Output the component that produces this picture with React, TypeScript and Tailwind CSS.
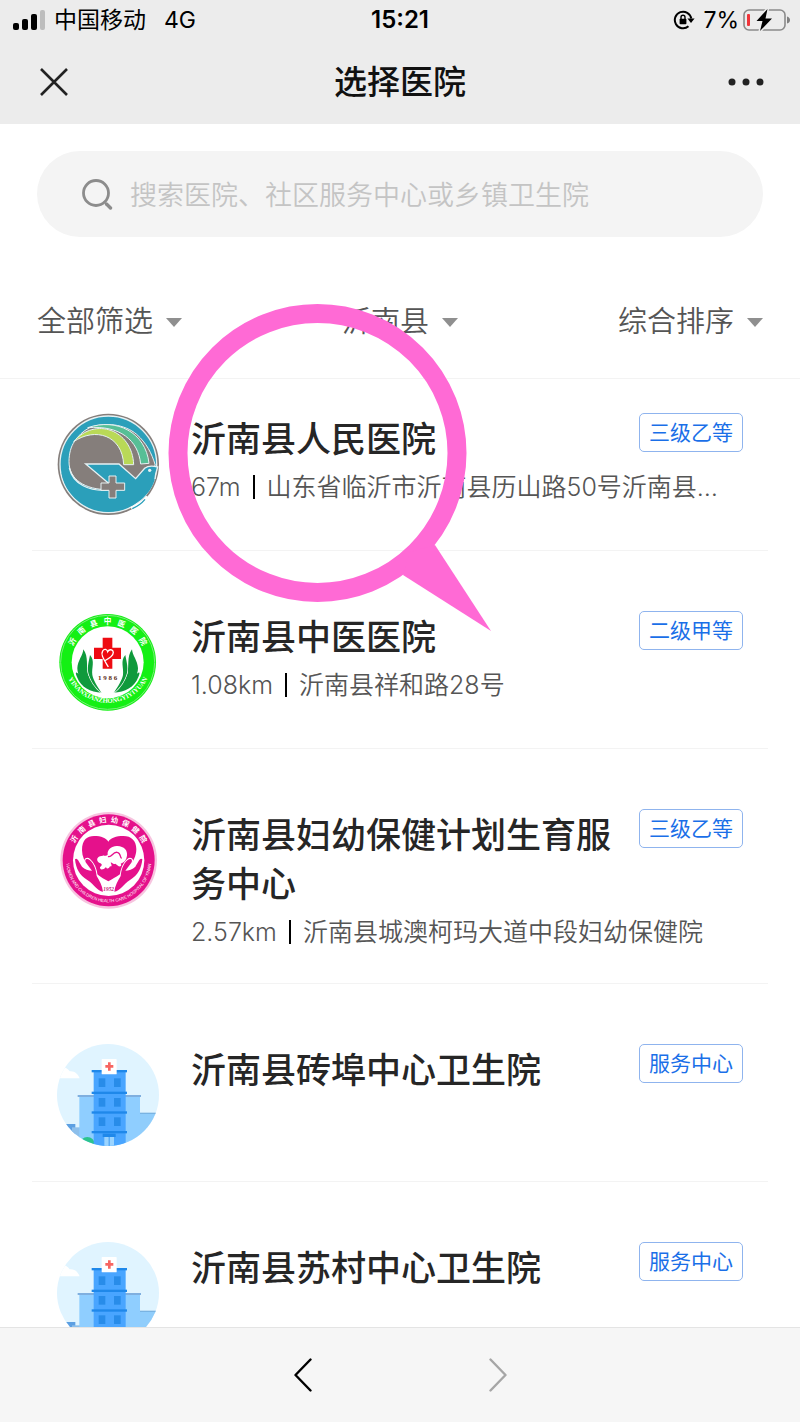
import React from 'react';

interface Hospital {
  name: string;
  level: string;
  distance?: string;
  address?: string;
  logo: React.FC;
}

const PeopleHospitalLogo: React.FC = () => (
  <svg viewBox="36 40 306 306" className="size-full" aria-hidden="true">
    <circle cx="190" cy="194" r="152" fill="#857e7b" />
    <circle cx="190" cy="194" r="145" fill="#2b9fba" stroke="#e6f1f3" strokeWidth="4" />
    {/* Серое поле и дуги */}
    <path
      d="M72 186 C72 162 78 140 88 126 C100 108 114 94 134 84 C180 66 240 74 275 104 C304 130 320 160 331 197 L272 237 L190 250 L190 270 C120 270 72 240 72 186 Z"
      fill="#857e7b"
      stroke="#e6f1f3"
      strokeWidth="3"
    />
    <path d="M128 84 C215 54 302 98 312 191 L287 193 C280 122 225 76 128 84 Z" fill="#57bf96" stroke="#e6f1f3" strokeWidth="3" />
    <path d="M86 126 C150 50 262 90 266 195 L236 195 C232 106 150 82 86 126 Z" fill="#b9d957" stroke="#e6f1f3" strokeWidth="3" />
    {/* Птица */}
    <path
      d="M122 193 L222 193 L272 237 L299 206 C310 197 324 198 338 202 C334 215 330 224 330 236 C318 290 260 334 190 336 C110 330 60 280 50 220 L72 205 C82 250 130 275 190 272 L190 250 Z"
      fill="#2b9fba"
    />
    <path d="M73 205 C84 254 134 276 190 271 M190 250 L122 193 L222 193 L272 237 L299 206 C310 197 324 198 338 202 C334 215 331 224 330 238" fill="none" stroke="#e6f1f3" strokeWidth="4" />
    <path d="M192 229 h21 v21 h26 v22 h-26 v23 h-21 v-23 h-24 v-22 h24 Z" fill="#857e7b" stroke="#e6f1f3" strokeWidth="3" />
    <circle cx="314" cy="212" r="5" fill="#e6f1f3" />
    <path d="M258 325 Q286 315 306 290" fill="none" stroke="#ffffff" strokeWidth="7" />
    <path d="M262 327 Q286 316 300 299" fill="none" stroke="#2b9fba" strokeWidth="4" />
  </svg>
);

const ChineseMedicineLogo: React.FC = () => (
  <svg viewBox="36 34 306 306" className="size-full" aria-hidden="true">
    <circle cx="188" cy="188" r="145" fill="#14f014" />
    <circle cx="188" cy="188" r="141" fill="none" stroke="#7dec7d" strokeWidth="3" />
    <circle cx="188" cy="188" r="108" fill="#ffffff" />
    <path id="tcm-top" d="M73 188 A115 115 0 0 1 303 188" fill="none" />
    <path id="tcm-bottom" d="M62 216 A133 133 0 0 0 316 216" fill="none" />
    <text className="fill-white font-['Noto_Sans_CJK_SC',sans-serif] text-[23px] font-bold">
      <textPath href="#tcm-top" startOffset="50%" textAnchor="middle">
        {'沂南县中医医院'.split('').join('\u2002\u00a0')}
      </textPath>
    </text>
    <text className="fill-white font-['Liberation_Serif',serif] text-[20px] font-bold">
      <textPath href="#tcm-bottom" startOffset="50%" textAnchor="middle">YINANXIANZHONGYIYIYUAN</textPath>
    </text>
    <path d="M173 114 h29 v30 h26 v34 h-26 v29 h-29 v-29 h-26 v-34 h26 Z" fill="#ee0b12" />
    <path d="M190 202 C176 178 166 164 173 154 C178 146 186 149 188 156 C193 147 204 149 205 158 C205 169 194 176 178 184" fill="none" stroke="#ffffff" strokeWidth="4" />
    <g id="tcm-hand" fill="#109a3c">
      <path d="M115 149 C114 168 98 182 97 206 C97 212 98 217 100 222 C92 216 90 218 96 232 C108 264 136 277 170 279 C152 264 138 246 130 226 C122 200 132 172 115 149 Z" />
      <path d="M135 166 C133 180 126 200 130 220 C137 244 150 264 169 279 C156 258 145 242 142 226 C139 204 151 184 135 166 Z" stroke="#ffffff" strokeWidth="4" paintOrder="stroke" />
    </g>
    <use href="#tcm-hand" transform="matrix(-1 0 0 1 376 0)" />
    <text x="188" y="241" textAnchor="middle" className="fill-[#5d2a18] font-['Liberation_Serif',serif] text-[21px] font-bold">1 9 8 6</text>
  </svg>
);

const MaternityLogo: React.FC = () => (
  <svg viewBox="37 39 306 306" className="size-full" aria-hidden="true">
    <circle cx="192" cy="193" r="145" fill="#f7c4df" />
    <circle cx="192" cy="193" r="138" fill="#e5118b" />
    <circle cx="192" cy="193" r="107" fill="#ffffff" />
    <path id="mch-top" d="M78 193 A114 114 0 0 1 306 193" fill="none" />
    <path id="mch-bottom" d="M65 207 A128 128 0 0 0 319 207" fill="none" />
    <text className="fill-white font-['Noto_Sans_CJK_SC',sans-serif] text-[22px] font-bold">
      <textPath href="#mch-top" startOffset="50%" textAnchor="middle">
        {'沂南县妇幼保健院'.split('').join('\u2002')}
      </textPath>
    </text>
    <text className="fill-white font-['Liberation_Sans',sans-serif] text-[13px]">
      <textPath href="#mch-bottom" startOffset="50%" textAnchor="middle">WOMEN AND CHILDREN HEALTH CARE HOSPITAL OF YINAN</textPath>
    </text>
    <path d="M191 256 C145 232 112 200 112 163 C112 130 128 120 148 120 C170 120 184 126 191 137 C198 126 214 120 236 120 C260 120 275 134 275 160 C275 200 238 232 191 256 Z" fill="#e5118b" />
    <path d="M189 176 C187 160 202 149 218 150 C239 151 249 163 247 179 C245 192 239 199 228 203 C232 208 228 213 222 211 L212 203 C205 208 202 197 198 200 C202 208 202 213 196 211 C192 220 186 219 184 213 C174 224 165 222 166 213 C174 208 172 203 165 201 C154 196 156 184 166 181 C178 177 186 181 189 176 Z" fill="#ffffff" />
    <path d="M190 181 C201 187 204 166 218 169 C229 171 225 184 231 187" fill="none" stroke="#e5118b" strokeWidth="4" />
    <g id="mch-hand">
      <path
        d="M91 190 C98 183 104 200 112 212 C120 220 132 224 142 224 L124 200 C118 190 127 185 135 192 C149 204 154 222 156 240 C164 254 173 268 175 287 C158 286 150 266 128 252 C104 238 94 218 91 190 Z"
        fill="#e5118b"
        stroke="#ffffff"
        strokeWidth="6"
        paintOrder="stroke"
      />
    </g>
    <use href="#mch-hand" transform="matrix(-1 0 0 1 384 0)" />
    <text x="192" y="284" textAnchor="middle" className="fill-[#c51a7c] font-['Liberation_Serif',serif] text-[16px] font-bold italic">1952</text>
  </svg>
);

const ServiceCenterLogo: React.FC = () => (
  <svg viewBox="37 40 306 306" className="size-full rounded-full" aria-hidden="true">
    <rect x="37" y="40" width="306" height="306" fill="#e0f4ff" />
    <path d="M30 143 V112 C48 104 68 109 75 122 C90 120 101 131 105 143 Z" fill="#ffffff" />
    <rect x="285" y="248" width="60" height="98" fill="#90cdfb" />
    <rect x="285" y="246" width="60" height="4" fill="#79b3e2" />
    <rect x="50" y="280" width="42" height="66" fill="#5c9fe2" />
    <rect x="82" y="290" width="24" height="56" fill="#8dbfeb" />
    <rect x="104" y="196" width="182" height="150" fill="#8fceff" />
    <rect x="99" y="193" width="190" height="6" fill="#7fafdf" />
    <ellipse cx="128" cy="340" rx="22" ry="21" fill="#2bc48f" />
    <rect x="147" y="122" width="96" height="224" fill="#49a5ff" />
    <g fill="#1f88ea">
      <rect x="141" y="118" width="106" height="7" />
      <rect x="141" y="183" width="106" height="7" />
      <rect x="141" y="242" width="106" height="7" />
      <rect x="141" y="301" width="106" height="7" />
      <rect x="174" y="309" width="39" height="10" />
    </g>
    <g fill="#288ce9">
      <rect x="162" y="143" width="20" height="26" />
      <rect x="208" y="143" width="20" height="26" />
      <rect x="162" y="202" width="20" height="26" />
      <rect x="208" y="202" width="20" height="26" />
      <rect x="162" y="260" width="20" height="26" />
      <rect x="208" y="260" width="20" height="26" />
    </g>
    <rect x="179" y="319" width="29" height="27" fill="#9bd4ff" />
    <rect x="192" y="319" width="3" height="27" fill="#3f9af0" />
    <rect x="171" y="85" width="45" height="46" rx="2" fill="#ffffff" />
    <path d="M190 95 h8 v8 h8 v8 h-8 v9 h-8 v-9 h-8 v-8 h8 Z" fill="#f76561" />
  </svg>
);

const hospitals: Hospital[] = [
  {
    name: '沂南县人民医院',
    level: '三级乙等',
    distance: '67m',
    address: '山东省临沂市沂南县历山路50号沂南县…',
    logo: PeopleHospitalLogo,
  },
  {
    name: '沂南县中医医院',
    level: '二级甲等',
    distance: '1.08km',
    address: '沂南县祥和路28号',
    logo: ChineseMedicineLogo,
  },
  {
    name: '沂南县妇幼保健计划生育服务中心',
    level: '三级乙等',
    distance: '2.57km',
    address: '沂南县城澳柯玛大道中段妇幼保健院',
    logo: MaternityLogo,
  },
  { name: '沂南县砖埠中心卫生院', level: '服务中心', logo: ServiceCenterLogo },
  { name: '沂南县苏村中心卫生院', level: '服务中心', logo: ServiceCenterLogo },
];

const filters = [
  { label: '筛选', value: '全部筛选' },
  { label: '地区', value: '沂南县' },
  { label: '排序', value: '综合排序' },
];

const StatusBar: React.FC = () => (
  <div className="grid h-10 grid-cols-3 items-center px-2.5 text-[23px] leading-10 text-black">
    <div className="flex items-center">
      <svg viewBox="0 0 34 22" className="mr-2 ml-0.5 h-[22px] w-[34px]" aria-hidden="true">
        <rect x="1" y="14" width="6" height="7" rx="2" />
        <rect x="10" y="10" width="6" height="11" rx="2" />
        <rect x="19" y="5" width="6" height="16" rx="2" />
        <rect x="28" y="1" width="5" height="20" rx="2" fill="#bdbdbd" />
      </svg>
      <span>中国移动</span>
      <span className="ml-[18px]">4G</span>
    </div>
    <div className="text-center text-2xl leading-10 font-semibold">15:21</div>
    <div className="flex items-center justify-end">
      <svg viewBox="0 0 22 20" className="mr-2 h-5 w-[22px]" aria-hidden="true">
        <path d="M15.5 16.3 A8.3 8.3 0 1 1 18.3 8.5" fill="none" stroke="#000" strokeWidth="2" />
        <path d="M14.4 8.6 H21.6 L18 13 Z" />
        <rect x="6.6" y="8.8" width="6.8" height="5.4" rx="0.8" />
        <path d="M8 9 V7.3 A2 2 0 0 1 12 7.3 V9" fill="none" stroke="#000" strokeWidth="1.4" />
      </svg>
      <span className="mr-1">7%</span>
      <svg viewBox="0 0 47 24" className="h-6 w-[47px]" aria-hidden="true">
        <rect x="1" y="2" width="41" height="20" rx="5" fill="none" stroke="#8a8a8a" strokeWidth="1.6" />
        <path d="M44 8.5 Q47 9.5 47 12 Q47 14.5 44 15.5 Z" fill="#808080" />
        <rect x="4" y="6" width="3" height="12" rx="1" fill="#f0353a" />
        <path d="M24.5 1 L13.5 13 H19.5 L17 23 L29 10.5 H22.5 Z" stroke="#ececec" strokeWidth="3" paintOrder="stroke" />
      </svg>
    </div>
  </div>
);

const HospitalRow: React.FC<{ hospital: Hospital }> = ({ hospital }) => {
  const Logo = hospital.logo;
  return (
    <li className="flex border-b border-[#f3f3f3] px-[25px] pt-15 pb-[35px] first:pt-[34px]">
      <div className="mr-8 size-[102px] shrink-0">
        <Logo />
      </div>
      <div className="min-w-0 flex-1">
        <div className="flex items-start justify-between">
          <h2 className="pt-0.5 text-[35px] leading-[49px] font-medium text-[#262626]">{hospital.name}</h2>
          <span className="shrink-0 rounded-[5px] border border-[#8fb4ee] px-[9px] text-[21px] leading-[37px] text-[#1a6fe8]">
            {hospital.level}
          </span>
        </div>
        {hospital.address && (
          <p className="mt-2 truncate text-[25px] leading-[31px] font-[350] text-[#555]">
            {hospital.distance}
            <span className="mx-3 inline-block h-6 w-0.5 bg-black align-[-3px]" />
            {hospital.address}
          </p>
        )}
      </div>
    </li>
  );
};

const App: React.FC = () => {
  return (
    <div className="relative flex h-screen flex-col overflow-hidden bg-white font-['Inter','Noto_Sans_CJK_SC',sans-serif]">
      <header className="shrink-0 bg-[#ececec]">
        <StatusBar />
        <div className="flex h-21 items-center justify-between px-9">
          <button type="button" aria-label="关闭" className="flex size-9 items-center justify-center">
            <svg viewBox="0 0 28 28" className="size-7" fill="none" stroke="#222" strokeWidth="2.6">
              <path d="M1 1 L27 27 M27 1 L1 27" />
            </svg>
          </button>
          <h1 className="text-[33px] leading-10 font-medium text-[#111]">选择医院</h1>
          <button type="button" aria-label="更多" className="flex size-9 items-center justify-center">
            <svg viewBox="0 0 36 8" className="h-2 w-9" fill="#222">
              <circle cx="4" cy="4" r="3.5" />
              <circle cx="18" cy="4" r="3.5" />
              <circle cx="32" cy="4" r="3.5" />
            </svg>
          </button>
        </div>
      </header>

      <main className="min-h-0 flex-1 overflow-hidden">
        {/* Поиск */}
        <label className="mx-[37px] mt-[27px] flex h-[86px] items-center rounded-full bg-[#f4f4f4] pl-11">
          <svg viewBox="0 0 32 32" className="mr-[17px] size-8 shrink-0" fill="none" stroke="#8c8c8c" strokeWidth="2.8">
            <circle cx="15" cy="15" r="12.5" />
            <path d="M25.5 26 L29.5 30" strokeWidth="3.4" strokeLinecap="round" />
          </svg>
          <input
            type="text"
            aria-label="搜索"
            placeholder="搜索医院、社区服务中心或乡镇卫生院"
            className="min-w-0 flex-1 bg-transparent pt-1 text-[27px] font-[350] text-[#333] outline-none placeholder:text-[#c4c4c4]"
          />
        </label>

        {/* Фильтры */}
        <div className="mt-16 flex justify-between border-b border-[#f3f3f3] px-[37px] pb-[35px]">
          {filters.map((filter) => (
            <label key={filter.label} className="flex items-center">
              <select
                aria-label={filter.label}
                className="field-sizing-content appearance-none bg-transparent text-[29px] leading-[42px] font-[350] text-[#555] outline-none"
              >
                <option>{filter.value}</option>
              </select>
              <svg viewBox="0 0 16 9" className="ml-[13px] h-[9px] w-4" fill="#8f8f8f" aria-hidden="true">
                <path d="M0 0 H16 L8 9 Z" />
              </svg>
            </label>
          ))}
        </div>

        {/* Список больниц */}
        <ul className="mx-8">
          {hospitals.map((hospital) => (
            <HospitalRow key={hospital.name} hospital={hospital} />
          ))}
        </ul>
      </main>

      <footer className="flex h-[95px] shrink-0 items-center justify-center gap-[159px] border-t border-[#e4e4e4] bg-[#f6f6f6]">
        <button type="button" aria-label="后退" className="flex h-10 w-9 items-center justify-center">
          <svg viewBox="0 0 18 34" className="h-[34px] w-[18px]" fill="none" stroke="#000" strokeWidth="2.4" strokeLinecap="round" strokeLinejoin="round">
            <path d="M16.5 1.5 L1.5 17 L16.5 32.5" />
          </svg>
        </button>
        <button type="button" aria-label="前进" className="flex h-10 w-9 items-center justify-center">
          <svg viewBox="0 0 18 34" className="h-[34px] w-[18px]" fill="none" stroke="#a6a6a6" strokeWidth="2.4" strokeLinecap="round" strokeLinejoin="round">
            <path d="M1.5 1.5 L16.5 17 L1.5 32.5" />
          </svg>
        </button>
      </footer>

      {/* Розовая выноска поверх списка */}
      <svg viewBox="168 303 324 329" className="pointer-events-none absolute top-[303px] left-[168px] h-[329px] w-[324px]" aria-hidden="true">
        <circle cx="317.5" cy="453" r="139.5" fill="none" stroke="#ff6ad5" strokeWidth="19" />
        <path d="M435 545 L491 631 L403 575 L410 552 Z" fill="#ff6ad5" />
      </svg>
    </div>
  );
};

export default App;
